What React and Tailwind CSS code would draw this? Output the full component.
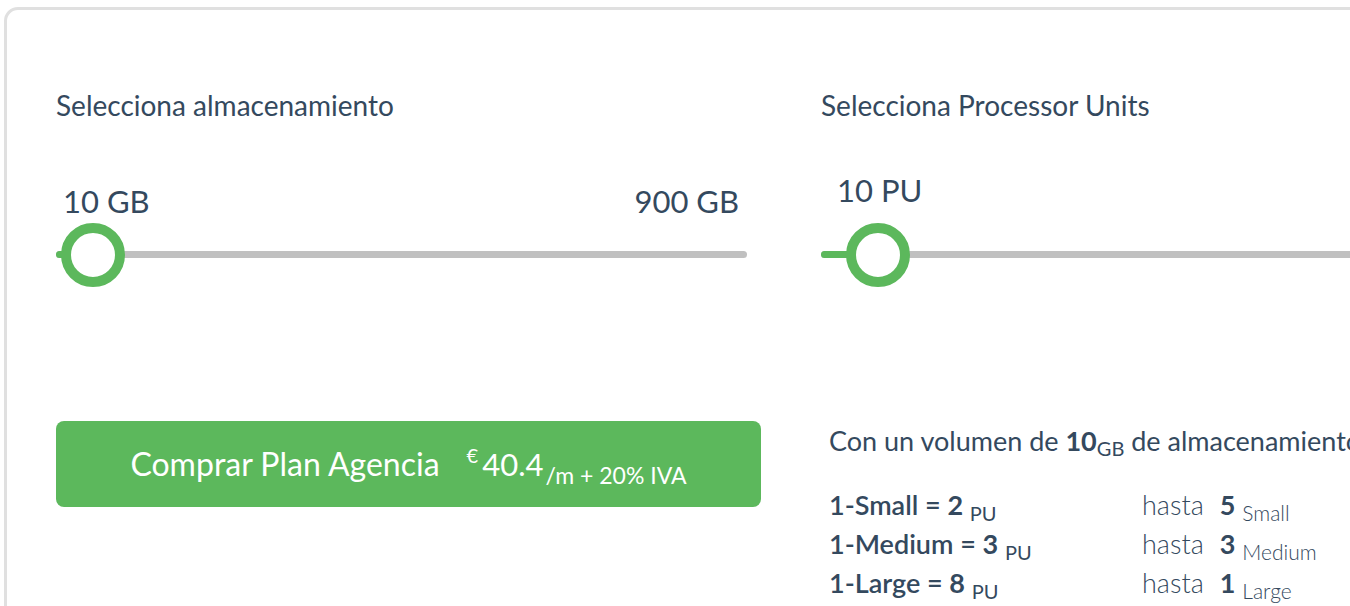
import React from 'react';

const font = { fontFamily: 'Lato, "Noto Sans", sans-serif' };

function Thumb() {
  return (
    <div className="w-[64px] h-[64px] rounded-full border-[10px] border-[#5cb85c] bg-white shrink-0" />
  );
}

function Row({ name, pu, count }) {
  return (
    <div className="flex items-baseline h-[39px] leading-[39px]">
      <div className="w-[313px] shrink-0 font-semibold">
        1-{name} = <span className="font-bold">{pu}</span>{' '}
        <span className="text-[20px] leading-none font-normal relative top-[6px]">PU</span>
      </div>
      <div>
        <span className="font-light">hasta</span>
        <span className="font-bold ml-[16px]">{count}</span>{' '}
        <span className="text-[21px] leading-none font-light relative top-[6px]">{name}</span>
      </div>
    </div>
  );
}

export default function App() {
  return (
    <div className="w-[1350px] h-[606px] overflow-hidden bg-white pl-[4px] pt-[7px] text-[#34495e]" style={font}>
      <div className="w-[1700px] h-[700px] border-[3px] border-[#e0e0e0] rounded-[14px] pt-[79px] pl-[49px] flex gap-[60px]">
        {/* storage */}
        <div className="w-[705px] shrink-0">
          <h3 className="text-[28px] leading-[32px]">Selecciona almacenamiento</h3>
          <div className="mt-[62px] flex justify-between text-[31px] leading-[36px] pl-[7px] pr-[22px]">
            <span>10 GB</span>
            <span>900 GB</span>
          </div>
          <div className="relative mt-[4px] h-[64px] flex items-center">
            <div className="absolute left-0 right-[14px] top-[28px] h-[7px] rounded-full bg-[#c0c0c0]" />
            <div className="absolute left-0 w-[20px] top-[28px] h-[7px] rounded-full bg-[#5cb85c]" />
            <div className="relative ml-[5px]">
              <Thumb />
            </div>
          </div>
          <button className="mt-[134px] w-full h-[86px] rounded-[8px] bg-[#5cb85c] text-white flex items-center justify-center">
            <span className="text-[32px]">Comprar Plan Agencia</span>
            <span className="ml-[27px] flex items-baseline">
              <span className="text-[20px] leading-none relative top-[-13px] mr-[4px]">€</span>
              <span className="text-[31px]">40.4</span>
              <span className="text-[23px] leading-none relative top-[8px] ml-[2px]">/m + 20% IVA</span>
            </span>
          </button>
        </div>

        {/* processor units */}
        <div className="w-[800px] shrink-0">
          <h3 className="text-[28px] leading-[32px]">Selecciona Processor Units</h3>
          <div className="mt-[51px] text-[31px] leading-[36px] pl-[16px]">10 PU</div>
          <div className="relative mt-[15px] h-[64px] flex items-center">
            <div className="absolute left-0 right-0 top-[28px] h-[7px] rounded-full bg-[#c0c0c0]" />
            <div className="absolute left-0 w-[56px] top-[28px] h-[7px] rounded-full bg-[#5cb85c]" />
            <div className="relative ml-[25px]">
              <Thumb />
            </div>
          </div>
          <div className="mt-[138px] pl-[8px] text-[27px]">
            <p className="leading-[32px] whitespace-nowrap">
              Con un volumen de <span className="font-bold">10</span>
              <span className="text-[20px] leading-none relative top-[5px]">GB</span> de almacenamiento
            </p>
            <div className="mt-[28px]">
              <Row name="Small" pu="2" count="5" />
              <Row name="Medium" pu="3" count="3" />
              <Row name="Large" pu="8" count="1" />
            </div>
          </div>
        </div>
      </div>
    </div>
  );
}
